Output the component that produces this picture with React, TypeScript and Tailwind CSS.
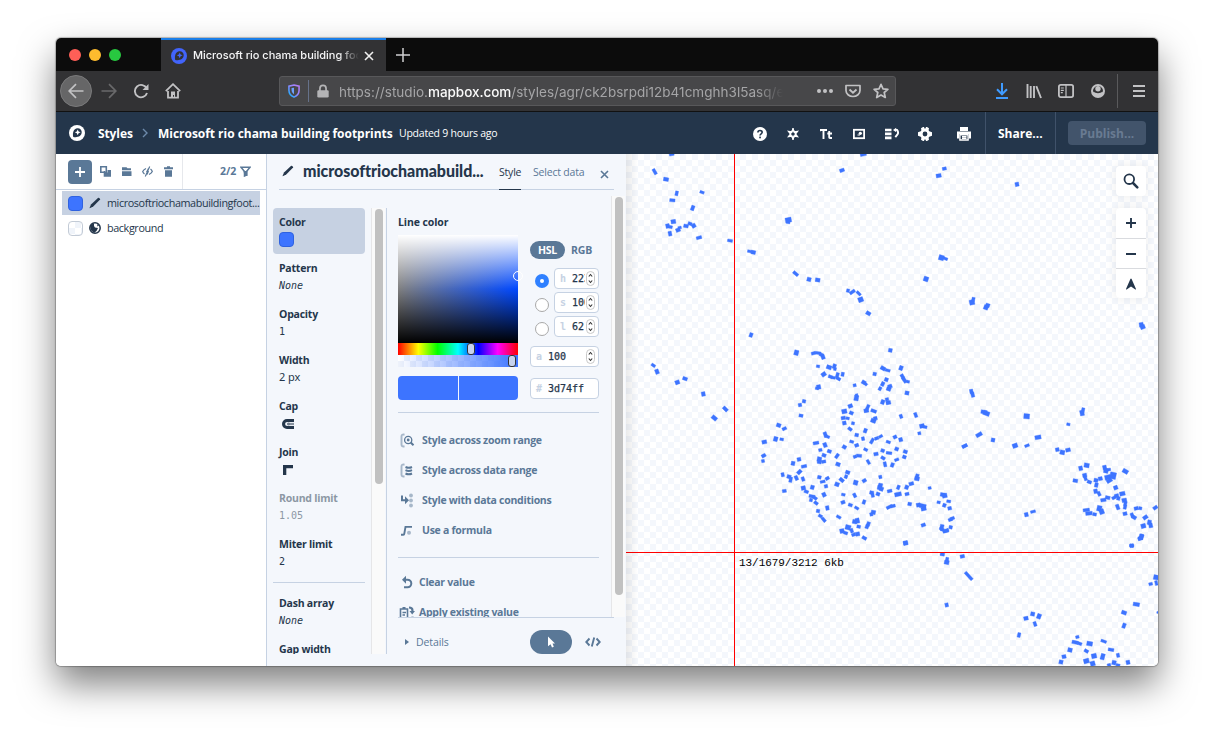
import React from "react";

type Dot = number[];

// Each footprint is [x, y, width, height, rotation] on a grid of thirds of a pixel.
const NORTH_WEST: Dot[] = [
  [137,13,14,8],[86,65,9,18,-30],[120,88,15,11,10],[152,130,9,14],[139,151,16,9,5],[228,127,13,8,20],[200,174,10,15,20],
  [142,215,14,12,-10],[125,228,11,13],[134,231,10,9],[132,251,10,14],[156,240,13,11,-20],[161,233,10,8],[180,228,14,10],
  [192,221,12,9,20],[203,227,12,12,-30],[219,263,16,9,-15],[312,272,15,8,10],[371,304,13,8,10],[382,307,13,11,12],[487,210,18,14],[487,214,11,14,10],
  [509,371,9,18,-50],[549,388,12,12,15],[575,390,14,11,10],[666,422,9,10],[679,426,18,9,-35],[698,430,16,8,45],
  [704,449,15,14,-20],[727,490,14,11,30],[375,555,10,13,20],[648,61,14,10,-20],[712,14,18,8],
];
const NORTH_EAST: Dot[] = [
  [163,56,12,9],[146,77,15,11,-10],[381,103,11,12],[154,323,15,15,15],[166,326,14,8,20],[108,387,14,14,20],[246,457,15,15],
  [250,448,9,12],[288,472,13,14,20],[293,466,12,11,20],[754,524,12,13,-10],[758,531,14,12,-20],
];
const WEST: Dot[] = [
  [82,91,13,8,35],[93,110,11,14,-20],[154,142,13,12,-20],[177,131,14,10,20],[232,177,11,13,-10],[298,222,10,17,-45],[265,249,12,17,-50],
];
const CENTER: Dot[] = [
  [109,53,13,15,15],[391,46,11,11,10],[160,55,12,9,-15],[174,54,18,8,8],[184,59,12,9,20],[189,66,11,13,-20],[174,94,10,8,10],
  [207,97,15,12,20],[223,94,10,14,20],[225,102,8,9],[191,118,14,12,-35],[211,125,12,9,20],[220,128,12,8,10],[232,121,9,16,15],[235,131,14,9,30],[248,118,9,12,10],
  [176,156,12,13],[171,160,10,8],[284,151,9,9],[311,142,12,11,30],[317,147,11,8,45],[289,189,13,16,10],[290,181,8,9],
  [344,117,10,10],[369,100,15,11,30],[383,106,15,8,15],[423,99,11,13,20],[427,124,10,13,-30],[433,135,10,18,-35],[444,140,9,8],
  [379,134,11,11,20],[368,147,10,13,25],[360,161,9,11,30],[390,154,12,11,-20],[386,162,13,11,20],[441,174,12,11],
  [381,193,10,9],[368,201,11,13,20],[385,203,14,11],[132,199,10,10],[120,210,10,10],[123,242,12,9],[56,271,13,11,20],[73,281,13,9,-25],
  [47,312,12,14,15],[65,313,11,8,10],[13,321,14,11],[11,362,13,10,-30],[9,378,9,9],
  [271,213,13,11,-20],[253,229,15,13],[274,234,12,10,25],[250,249,13,10],[263,250,10,8],[253,264,11,11],[279,265,9,9],
  [323,217,9,17,25],[319,227,14,11,-10],[341,228,17,9,20],[340,257,15,12,20],[346,250,11,10],[270,282,13,9,35],
  [316,287,10,13,20],[290,300,11,10],[309,311,9,11],[275,320,12,8,15],[290,331,12,10,-20],[253,336,12,11,30],
  [336,318,9,18,30],[350,310,12,9,-20],[362,304,12,8,-30],[385,321,13,8,20],[405,306,11,10,-25],[422,314,11,12,-15],
  [423,244,9,12,-20],[467,240,9,15,-20],[486,273,14,12],[495,276,12,8],[478,295,9,9],[614,333,15,9,-25],
  [196,299,10,16,-20],[202,305,14,8,20],[168,324,17,9],[195,330,11,14,-20],[181,345,10,9],[208,349,12,10,20],[192,361,12,10,20],
  [178,373,13,14],[191,380,13,9,-10],[178,381,12,10],[231,363,9,15,35],[234,388,13,11,20],[285,365,10,9,-20],[297,362,16,9,5],
  [317,344,12,8,25],[325,381,8,15,-30],[348,357,13,10],[368,347,11,10,20],[387,354,17,8,8],[410,342,11,11,20],[436,350,12,10,20],
  [369,369,13,9,30],[375,388,9,15],[397,390,10,13,20],[410,374,13,8,-20],[433,366,11,10,20],
  [117,373,11,11],[99,385,11,12],[132,394,16,9],[118,411,11,15,45],[68,419,9,12],[87,425,12,11,15],[92,434,9,16,10],
  [109,429,10,14,-25],[129,432,9,13,-20],[73,468,12,9,-10],[130,459,13,12],[139,470,13,9,20],[157,457,11,12,15],
  [178,427,11,10],[188,440,15,8],[202,430,12,9,-30],[198,454,10,10],[156,484,18,9],[165,489,14,9,35],[153,495,9,10],[168,504,13,9,35],
  [192,479,11,13,-25],[202,519,10,13,-10],[174,528,10,10],[181,543,12,9,30],[191,554,9,16,-40],[236,546,14,8,30],
  [231,448,13,12,20],[245,435,10,15,-50],[258,425,9,11,20],[263,412,13,10,20],[287,443,13,14,15],[313,437,12,10,-30],
  [250,479,11,8],[249,502,12,10,-20],[271,510,12,9,20],[284,481,9,13,-25],[290,519,13,8,30],[312,501,9,13,20],
  [335,473,12,10],[338,481,9,12],[354,477,11,10,20],[361,426,9,10],[361,452,12,14],[364,462,12,12,20],[357,457,9,13],
  [389,468,14,9],[415,457,9,13,20],[414,478,20,12],[440,457,11,12,20],[441,477,12,9],[454,446,14,10,-15],[471,425,10,16,15],[471,431,14,12],
  [509,459,9,8],[388,516,18,9,-25],[399,513,14,9],[449,507,11,10],[475,510,12,12],[488,513,20,12],[491,522,15,10],
  [548,479,14,11,10],[554,482,14,13],[536,502,10,8],[566,499,12,8,10],[553,511,10,11,20],[569,520,11,10],[571,554,12,9,-20],[577,550,13,9,-20],
  [546,574,11,11],[545,582,14,8,25],[572,577,10,10],[558,587,16,9,-20],[490,570,13,10,-20],[437,624,13,12],
  [340,532,13,12],[334,538,9,10],[284,560,13,12],[292,557,12,15],[264,577,16,14,15],[246,588,13,13],[257,594,12,9,20],
  [275,587,9,13,-20],[281,599,12,9,-20],[293,597,12,12],[296,575,11,9],[325,567,10,13,20],[321,575,10,12,20],[313,609,14,9,30],
];
const EAST: Dot[] = [
  [34,64,10,13,-10],[38,74,10,15,-15],[72,126,18,11,10],[79,130,19,13,20],[200,139,17,15,5],[369,121,9,15],[366,129,12,16],
  [325,163,10,8],[57,194,19,11,-30],[99,210,11,11],[14,228,16,9,-25],[165,227,15,13,-20],[201,227,14,8,-20],[234,202,18,12,-10],
  [292,239,11,11],[307,247,14,13],[324,240,14,11],[380,286,15,13,10],[362,295,11,13],[346,332,14,10,10],
  [374,316,12,11],[376,324,9,16,-20],[388,336,13,9,20],[408,331,12,11],[421,326,12,11],[409,345,10,13],[407,364,11,13],[417,371,9,14,-25],
  [434,293,11,14],[438,302,13,14],[446,299,12,8],[496,304,17,12,30],[443,322,17,14],[459,317,18,20],[448,332,17,11,-30],
  [467,353,12,12,-20],[487,371,16,12],[462,383,13,9,-30],[470,377,12,10],[475,385,10,11],[430,390,16,10,-10],[443,383,14,10],
  [493,391,14,12],[496,401,9,13],[473,411,10,16,-20],[495,411,9,13],[495,431,12,10],[418,415,14,16],[425,425,14,15,-20],
  [379,420,19,9,-8],[387,430,20,11,-5],[404,433,11,9],[199,434,11,12],[219,425,15,8,-15],
  [529,415,13,10],[541,415,9,9],[586,413,14,10,-35],[516,435,9,12,-20],[522,442,14,11,30],[556,442,15,11,-35],[550,468,14,13,-15],
  [568,457,11,14],[572,466,11,14],[544,500,13,14,15],[540,506,12,9,-20],[515,527,12,9,15],
];
const SOUTH: Dot[] = [
  [16,39,12,12],[125,0,8,6],[137,3,17,10],[127,73,13,9,10],[141,90,9,16,10],[140,97,14,12],[187,79,13,10],[206,138,9,31,-42],[140,225,10,12],
  [398,252,12,12],[378,265,13,11],[417,259,12,15,20],[405,282,9,14,-20],[357,315,9,14],[532,321,10,8],[525,337,18,10],[539,341,13,9,20],
  [510,360,13,12],[492,380,12,11],[483,396,12,12],[569,341,17,13,10],[559,363,13,9,30],[582,378,15,14],[608,380,12,18,15],
  [611,334,17,8,20],[633,359,17,9,10],[654,376,9,12],[559,393,16,14,-15],[578,401,14,14,-15],[642,398,12,13],[627,405,10,8],[654,405,12,7],
  [684,397,11,12],[672,248,15,11,20],[672,287,10,15,20],[709,223,19,11,10],[752,162,11,9],[768,142,14,14],[769,159,8,14],[773,247,5,6],
  [695,47,12,10],[725,19,10,13,20],[721,25,13,11],
];
const GROUPS: { x: number; y: number; dots: Dot[] }[] = [
  { x: 0, y: -4, dots: NORTH_WEST },
  { x: 264, y: -4, dots: NORTH_EAST },
  { x: 0, y: 181, dots: WEST },
  { x: 134, y: 181, dots: CENTER },
  { x: 334, y: 216, dots: EAST },
  { x: 274, y: 376, dots: SOUTH },
];

function Footprints() {
  return (
    <svg width="532" height="512" className="block" fill="#3d74ff">
      {GROUPS.map((g, i) => (
        <g key={i} transform={`translate(${g.x} ${g.y}) scale(0.33333)`} stroke="#3d74ff" strokeWidth="1" strokeLinejoin="round">
          {g.dots.map(([x, y, w, h, r = 0], j) => (
            <rect key={j} x={x - w / 2} y={y - h / 2} width={w} height={h} transform={`rotate(${r || (j % 2 ? 12 : -12)} ${x} ${y})`} />
          ))}
        </g>
      ))}
      <path d="M108 0h1v512h-1z M0 398h532v1H0z" fill="#ff0000" />
    </svg>
  );
}

function Icon({ size = 16, box = 16, className = "", children }: { size?: number; box?: number; className?: string; children: React.ReactNode }) {
  return (
    <svg width={size} height={size} viewBox={`0 0 ${box} ${box}`} className={`block shrink-0 ${className}`} fill="currentColor">
      {children}
    </svg>
  );
}

const stroke = { fill: "none", stroke: "currentColor" };

function Logo({ hole }: { hole: string }) {
  return (
    <Icon>
      <circle cx="8" cy="8" r="8" />
      <path d="M4.200 11.900c-.9-4 .3-8.300 4.300-8.600 2.600-.1 4.300 1.800 4.200 4-.2 4.300-4.500 5.400-8.500 4.600z" fill={hole} />
      <path d="M8.700 4.500l.9 1.900 2 .9-2 .9-.9 2-.9-2-2-.9 2-.9z" />
    </Icon>
  );
}

function Pencil() {
  return (
    <Icon size={12} box={12}>
      <path d="M9.200.8c.6-.4 2.400 1 1.900 1.800L4.200 9.500.8 11.200c-.2 0-.3-.2-.2-.5L2 7.500z" />
    </Icon>
  );
}

function TabStrip() {
  return (
    <div className="flex h-[33px] bg-[#0c0c0c]">
      <div className="flex w-[105px] items-center gap-2 pl-[13px] pt-[1px]">
        <span className="size-3 rounded-full bg-[#ff5f57]" />
        <span className="size-3 rounded-full bg-[#febc2e]" />
        <span className="size-3 rounded-full bg-[#28c840]" />
      </div>
      <div className="flex w-[225px] items-center border-t-2 border-[#1a7ee8] bg-[#323234] pl-[10px] text-[#4264fb]">
        <Logo hole="#323234" />
        <div className="ml-[6px] w-[166px] overflow-hidden whitespace-nowrap text-[11px] font-medium tracking-[-0.02px] text-[#f5f5f6] [mask-image:linear-gradient(to_right,#000_88%,transparent)]">
          Microsoft rio chama building footprints
        </div>
        <Icon size={10} box={10} className="ml-[5px] text-[#f0f0f0]">
          <path d="M1 1l8 8M9 1L1 9" {...stroke} strokeWidth="1.600" />
        </Icon>
      </div>
      <div className="flex w-[34px] items-center justify-center text-[#d0d0d2]">
        <Icon size={14} box={14}>
          <path d="M7 0v14M0 7h14" {...stroke} strokeWidth="1.500" />
        </Icon>
      </div>
    </div>
  );
}

function NavBar() {
  return (
    <div className="flex h-[41px] items-center border-b border-[#111] bg-[#323234] text-[#c2c2c4]">
      <div className="ml-[4px] flex size-8 items-center justify-center rounded-full border border-[#7a7a7b] bg-[#666667]">
        <Icon>
          <path d="M15.500 8H1M8 1.200L1.200 8 8 14.800" {...stroke} strokeWidth="1.700" />
        </Icon>
      </div>
      <Icon className="ml-[9px] text-[#69696b]">
        <path d="M.5 8H15M8 1.200L14.800 8 8 14.800" {...stroke} strokeWidth="1.700" />
      </Icon>
      <Icon className="ml-[16px]">
        <path d="M13.700 5.500A6.200 6.200 0 1 0 14 10" {...stroke} strokeWidth="1.900" />
        <path d="M15.500 1v6h-6z" />
      </Icon>
      <Icon className="ml-[16px]">
        <path d="M.8 8.200L8 1.200l7.200 7M3 8v6.700h10V8" {...stroke} strokeWidth="1.800" />
        <path d="M6 14V8.500h4V14H9v-2H8v2z" />
      </Icon>
      <div className="ml-[98px] flex h-[30px] w-[617px] items-center rounded-[3px] border border-[#58585a] bg-[#474749]">
        <Icon size={14} className="ml-[7px]">
          <defs>
            <linearGradient id="shield" x1="1" y1="0" x2="0" y2="1">
              <stop offset="0" stopColor="#b77cf5" />
              <stop offset=".5" stopColor="#8f86ff" />
              <stop offset="1" stopColor="#00b8ff" />
            </linearGradient>
          </defs>
          <path d="M8 1.200l5.800 1.300V7c0 4-2.500 6.500-5.800 8-3.300-1.500-5.800-4-5.800-8V2.500z" fill="none" stroke="url(#shield)" strokeWidth="1.800" />
          <path d="M8 4.200v7.500C6 10.200 5.200 8.800 5.200 6.500V4.700z" fill="#6da0ff" />
        </Icon>
        <div className="ml-[7px] h-[22px] w-px bg-[#66728a]" />
        <Icon size={14} className="ml-[7px] text-[#b4b4b6]">
          <path d="M4.500 8V5a3.500 3.500 0 0 1 7 0v3" {...stroke} strokeWidth="2" />
          <rect x="1.500" y="7" width="13" height="8.500" rx="1.500" />
        </Icon>
        <div className="ml-[9px] mt-[2px] w-[444px] overflow-hidden whitespace-nowrap text-[13.500px] tracking-[0.03px] text-[#a5a5a7] [mask-image:linear-gradient(to_right,#000_94%,transparent)]">
          https://studio.<span className="font-medium tracking-[-0.05px] text-[#fafafa]">mapbox.com</span>/styles/agr/ck2bsrpdi12b41cmghh3l5asq/edit
        </div>
        <Icon className="ml-[34px]">
          <circle cx="2" cy="8" r="2" /><circle cx="8" cy="8" r="2" /><circle cx="14" cy="8" r="2" />
        </Icon>
        <Icon className="ml-[12px]">
          <path d="M1 2.500h14v5a7 6 0 0 1-14 0z" {...stroke} strokeWidth="1.700" strokeLinejoin="round" />
          <path d="M4.500 6.500L8 9.800l3.500-3.300" {...stroke} strokeWidth="1.900" />
        </Icon>
        <Icon className="ml-[12px]">
          <path d="M8 1.300l2 4.500 4.900.5-3.700 3.200 1.100 5L8 12l-4.300 2.500 1.100-5L1.100 6.300 6 5.800z" {...stroke} strokeWidth="1.700" strokeLinejoin="round" />
        </Icon>
      </div>
      <div className="ml-[98px] flex items-center gap-4">
        <Icon className="text-[#3f9bff]">
          <path d="M8 0v11M3 6.300l5 5 5-5M2 15h12" {...stroke} strokeWidth="2" />
        </Icon>
        <Icon>
          <path d="M1.500 1v14M4.700 3v12M8 3v12M10.300 3.200L15 15" {...stroke} strokeWidth="1.900" />
        </Icon>
        <Icon>
          <rect x=".9" y="1.900" width="14.200" height="12.200" rx="1.800" {...stroke} strokeWidth="1.800" />
          <path d="M8 2v12M2.800 5h3M2.800 7.300h3M2.800 9.600h2" {...stroke} strokeWidth="1.200" />
        </Icon>
        <Icon>
          <circle cx="8" cy="8" r="6" {...stroke} strokeWidth="2" />
          <circle cx="8" cy="5.800" r="2.700" />
          <path d="M3.500 8.500c2 2.300 7 2.300 9 0l.8 2-3 3H5.700l-3-3z" />
        </Icon>
      </div>
      <div className="ml-[11px] h-[34px] w-px bg-[#5a5a5c]" />
      <Icon className="ml-[13px]">
        <path d="M2 3h12M2 8h12M2 13h12" {...stroke} strokeWidth="2" />
      </Icon>
    </div>
  );
}

function Cell({ children }: { children: React.ReactNode }) {
  return <div className="flex w-[33px] justify-center">{children}</div>;
}

function StudioHeader() {
  return (
    <div className="flex h-[42px] items-center bg-[#24364b] text-white">
      <div className="ml-[13px]"><Logo hole="#24364b" /></div>
      <div className="ml-[13px] mt-[2px] w-[35px] whitespace-nowrap text-[12px] font-bold tracking-[-0.1px]">Styles</div>
      <Icon size={10} box={10} className="ml-[7px] text-[#6d8aab]">
        <path d="M3 1l4 4-4 4" {...stroke} strokeWidth="1.400" />
      </Icon>
      <div className="ml-[8px] mt-[2px] w-[235px] whitespace-nowrap text-[12px] font-bold tracking-[-0.03px]">Microsoft rio chama building footprints</div>
      <div className="ml-[6px] mt-[2px] whitespace-nowrap text-[10.500px] tracking-[-0.24px]">Updated 9 hours ago</div>
      <div className="ml-auto flex items-center pr-px pt-px">
        <Cell>
          <Icon size={14} box={14}>
            <circle cx="7" cy="7" r="7" />
            <path d="M4.900 5.600c0-2.800 4.300-2.600 4.300-.3C9.200 6.800 7 6.800 7 8.500" fill="none" stroke="#24364b" strokeWidth="1.600" />
            <rect x="6.200" y="9.600" width="1.700" height="1.700" fill="#24364b" />
          </Icon>
        </Cell>
        <Cell>
          <Icon size={12} box={12}>
            <path d="M6 1.700l1.300 2.300 2.800-.4L8.300 6l1.800 2.400-2.800-.4L6 10.300 4.700 8l-2.800.4L3.700 6 1.900 3.600l2.800.4z" {...stroke} strokeWidth="1.700" />
            <path d="M5.300 0h1.400v3H5.300zM5.300 9h1.400v3H5.300z" />
          </Icon>
        </Cell>
        <Cell>
          <Icon size={12} box={12}>
            <path d="M0 3.200V2h7M3.500 2v9M9.200 3v6.200q0 .8.8.800H12M7.300 5.500H12" {...stroke} strokeWidth="1.900" />
          </Icon>
        </Cell>
        <Cell>
          <Icon size={12} box={12}>
            <rect x=".9" y="1.800" width="10.200" height="8.400" {...stroke} strokeWidth="1.800" />
            <circle cx="7.300" cy="5.300" r="1.600" /><path d="M4.500 6.500h2.500v1H4.500z" />
          </Icon>
        </Cell>
        <Cell>
          <Icon size={14} box={14}>
            <path d="M0 3h6.500M0 6.900h6.500M0 10.800h6.500" {...stroke} strokeWidth="2.700" />
            <path d="M10.500 2.900h1.500q2 2.500.3 4.800l-2 2.500" {...stroke} strokeWidth="1.900" />
            <path d="M8 3l3.200-2.300v4.600z" />
          </Icon>
        </Cell>
        <Cell>
          <Icon size={14} box={14}>
            <path d="M5 0h1l.5 1.500h1L8 0h1l2 1.300-.4 2 .7 1 2.700.9v3.600l-2.700.9-.7 1 .4 2L9 14H8l-.5-1.500h-1L6 14H5l-2-1.300.4-2-.7-1L0 8.800V5.200l2.700-.9.700-1-.4-2zM7 4.600a2.400 2.400 0 1 0 0 4.800 2.400 2.400 0 0 0 0-4.800z" fillRule="evenodd" />
          </Icon>
        </Cell>
        <div className="flex w-[43px] justify-center pl-[2px]">
          <Icon size={14} box={14}>
            <path d="M3 0h8v4H3zM0 4.500h14v7h-2V7H2v4.500H0z" />
            <path d="M2.900 7.800h8.200v5.200H2.900zM5 9.700h4.500M5 11.400h4.500" {...stroke} strokeWidth="1.400" />
          </Icon>
        </div>
      </div>
      <div className="flex h-full w-[70px] items-center border-l border-[#40526a] pl-3 pt-[2px] text-[12px] font-bold">Share...</div>
      <div className="flex h-full w-[103px] items-center border-l border-[#40526a] pl-3">
        <div className="flex h-6 w-[78px] items-center justify-center rounded-[4px] bg-[#42546b] pt-px text-[12px] font-bold text-[#697b92]">Publish...</div>
      </div>
    </div>
  );
}

function LayerList() {
  return (
    <div className="w-[210px] shrink-0 bg-white text-[#5a7897]">
      <div className="flex h-9 items-center border-b border-[#c6d2e3]">
        <div className="flex h-full w-[127px] items-center border-r border-[#e6e8ec] pl-3">
          <div className="flex size-6 items-center justify-center rounded-[4px] bg-[#5a7897] text-white">
            <Icon size={10} box={10}><path d="M5 0v10M0 5h10" {...stroke} strokeWidth="1.800" /></Icon>
          </div>
          <div className="ml-[8px] flex gap-[10px]">
            <Icon size={11} box={11}><path d="M.8.800h5.500v5.500H.800z" {...stroke} strokeWidth="1.600" /><path d="M3.700 5H5v1.500h2.500V4H11v6.700H3.700z" /></Icon>
            <Icon size={11} box={11}><path d="M1 1.200h4.500l1 1h3.500V4.200H1zM1 5.200h9.500V10H1z" /></Icon>
            <Icon size={11} box={11}><path d="M4 2.500Q1.500 3.800.700 5.500 1.200 7 2.500 8M7 8.500q2.500-1.200 3.300-3Q9.800 4 8.500 3M7.700.600L3.300 10.400M4.500 6.200L6.500 2.500M6.500 5L5 8.500" {...stroke} strokeWidth="1.200" /></Icon>
            <Icon size={11} box={11}><path d="M4 .300h3v1h3v2H1v-2h3zM2 4.200h7v6.500H2z" /></Icon>
          </div>
        </div>
        <div className="flex items-center pl-[37px] pt-px text-[10.500px] font-bold">
          2/2
          <Icon size={11} box={11} className="-mt-px ml-[4px]"><path d="M1 1.300h9L6.500 5.500V9l-2 1V5.500z" {...stroke} strokeWidth="1.500" /><path d="M3.500 5h4v5h-3z" /></Icon>
        </div>
      </div>
      <div className="mt-px px-[6px] text-[#24364b]">
        <div className="flex h-6 items-center bg-[#c6d1e2] pl-[6px]">
          <span className="size-[15px] shrink-0 rounded-[4px] border border-[#2f62e0] bg-[#3d74ff]" />
          <span className="ml-[6px]"><Pencil /></span>
          <span className="ml-[6px] whitespace-nowrap text-[10.800px] tracking-[-0.39px]">microsoftriochamabuildingfoot...</span>
        </div>
        <div className="flex h-[26px] items-center pl-[6px]">
          <span className="size-[15px] shrink-0 rounded-[4px] border border-[#c3cbd6] bg-[repeating-conic-gradient(#f0f4fa_0_25%,#fff_0_50%)] bg-[length:12px_12px]" />
          <Icon size={12} box={12} className="ml-[6px]">
            <circle cx="6" cy="6" r="5.200" {...stroke} strokeWidth="1.500" />
            <path d="M1 3.500L5 1v3l1 1.500 3 .5L7.500 9 5 11 1.800 8z M8 2l2 1.500-1.500 1z" />
          </Icon>
          <span className="ml-[6px] text-[10.800px] tracking-[-0.39px]">background</span>
        </div>
      </div>
    </div>
  );
}

function Prop({ name, muted, selected, children }: { name: string; muted?: boolean; selected?: boolean; children?: React.ReactNode }) {
  return (
    <div className={`h-[46px] shrink-0 rounded-[4px] px-[6px] pt-[6px] ${selected ? "bg-[#c6d1e2]" : ""} ${muted ? "text-[#8c97a4]" : ""}`}>
      <div className="whitespace-nowrap text-[10.500px] font-bold leading-4 tracking-[-0.22px]">{name}</div>
      <div className="flex h-[18px] items-center font-['DejaVu_Sans_Mono',monospace] text-[10px]">{children}</div>
    </div>
  );
}

function PropertyList() {
  return (
    <div className="flex h-[446px] overflow-hidden">
      <div className="flex w-[92px] flex-col">
        <Prop name="Color" selected><span className="size-[15px] rounded-[4px] border border-[#2f62e0] bg-[#3d74ff]" /></Prop>
        <Prop name="Pattern"><i>None</i></Prop>
        <Prop name="Opacity">1</Prop>
        <Prop name="Width"><span className="pt-px font-['Noto_Sans',sans-serif] text-[11px] tracking-[-0.100px]">2 px</span></Prop>
        <Prop name="Cap">
          <Icon size={12} box={12} className="ml-[3px] mt-[2px]">
            <path d="M5 1h7v3.200H7.500V7.800H12V11H5A5 5 0 0 1 5 1z" />
            <circle cx="5.200" cy="6" r="2.100" fill="#f4f7fc" />
            <path d="M5.200 5.300H12v1.400H5.200z" />
            <path d="M6.500 4.200H12v1H6.500zM6.500 6.800H12v1H6.500z" fill="#f4f7fc" />
          </Icon>
        </Prop>
        <Prop name="Join"><Icon size={12} box={12} className="ml-[3px] mt-[2px]"><path d="M1 1h10v3.300H4.300V11H1z" /></Icon></Prop>
        <Prop name="Round limit" muted>1.05</Prop>
        <Prop name="Miter limit">2</Prop>
        <div className="mb-[6px] mt-[6px] h-px shrink-0 bg-[#c6d2e3]" />
        <Prop name="Dash array"><i>None</i></Prop>
        <Prop name="Gap width">0</Prop>
      </div>
      <div className="ml-[6px] w-[14px] border-l border-[#e6e6e8] bg-[#fafafa] pl-[3px] pt-px">
        <div className="h-[275px] w-2 rounded-full bg-[#c1c1c1]" />
      </div>
    </div>
  );
}

function Stepper() {
  return (
    <svg width="9" height="15" viewBox="0 0 9 15" className="ml-auto block shrink-0">
      <rect x=".5" y=".5" width="8" height="14" rx="4" fill="#fff" stroke="#c8c8c8" />
      <path d="M2.800 5.500L4.500 3.500l1.700 2M2.800 9.500l1.700 2 1.700-2" fill="none" stroke="#333" strokeWidth="1.100" />
    </svg>
  );
}

function Field({ label, value, wide, step = true }: { label: string; value: string; wide?: boolean; step?: boolean }) {
  return (
    <div className={`flex h-[21px] items-center rounded-[4px] border border-[#c6d2e3] bg-white pl-[5px] pr-[3px] font-['DejaVu_Sans_Mono',monospace] text-[10px] ${wide ? "w-[69px]" : "w-[45px]"}`}>
      <span className="w-[6px] font-bold text-[#c6d2e3]">{label}</span>
      <span className={`ml-[6px] overflow-hidden [-webkit-text-stroke:0.25px_#24364b] ${wide ? "" : "w-[13px]"}`}>{value}</span>
      {step && <Stepper />}
    </div>
  );
}

function Radio({ on }: { on?: boolean }) {
  return on ? (
    <span className="flex size-[14px] items-center justify-center rounded-full bg-[#2f80ff]"><span className="size-1 rounded-full bg-white" /></span>
  ) : (
    <span className="size-[14px] rounded-full border border-[#a9a9a9] bg-white" />
  );
}

function ColorPicker() {
  return (
    <div className="flex h-[165px]">
      <div className="w-[120px]">
        <div className="relative h-[108px] bg-[linear-gradient(to_bottom,#fff,rgba(255,255,255,0)_50%,rgba(0,0,0,0)_50%,#000),linear-gradient(to_right,#808080,#0048ff)]">
          <span className="absolute left-[115px] top-[36px] size-[10px] rounded-full border border-white" />
        </div>
        <div className="relative h-3 bg-[linear-gradient(to_right,#f00,#ff0_17%,#0f0_33%,#0ff_50%,#00f_67%,#f0f_83%,#f00)]">
          <span className="absolute left-[69px] top-0 h-3 w-2 rounded-[3px] border border-[#333] bg-[#c6d2ee]" />
        </div>
        <div className="relative h-3 bg-[linear-gradient(to_right,transparent,#3d74ff),repeating-conic-gradient(#eef2fa_0_25%,#fff_0_50%)] bg-[length:100%_100%,12px_12px]">
          <span className="absolute left-[110px] top-0 h-3 w-2 rounded-[3px] border border-[#333] bg-[#c6d2ee]" />
        </div>
        <div className="mt-[9px] flex h-6 gap-px overflow-hidden rounded-[4px]">
          <div className="w-[60px] bg-[#3d74ff]" />
          <div className="flex-1 bg-[#3d74ff]" />
        </div>
      </div>
      <div className="ml-3 w-[69px] pt-[6px]">
        <div className="flex h-[18px] items-center text-[10.500px] font-bold text-[#5a7897]">
          <span className="flex h-[18px] w-[35px] items-center justify-center rounded-full bg-[#5a7897] pt-px tracking-[-0.2px] text-white">HSL</span>
          <span className="ml-[6px] pt-px tracking-[-0.2px]">RGB</span>
        </div>
        <div className="mt-[9px] flex">
          <div className="flex w-6 flex-col gap-[10px] pl-[5px] pt-[6px]"><Radio on /><Radio /><Radio /></div>
          <div className="flex flex-col gap-[3px]">
            <Field label="h" value="223" />
            <Field label="s" value="100" />
            <Field label="l" value="62" />
          </div>
        </div>
        <div className="mt-[9px]"><Field label="a" value="100" wide /></div>
        <div className="mt-[11px]"><Field label="#" value="3d74ff" wide step={false} /></div>
      </div>
    </div>
  );
}

function Action({ icon, text, tight }: { icon: React.ReactNode; text: string; tight?: boolean }) {
  return (
    <div className="flex h-[30px] items-center text-[10.500px] font-bold tracking-[-0.27px] text-[#5a7897]">
      <span className={tight ? "ml-[1px]" : "ml-[2px]"}>{icon}</span>
      <span className={`whitespace-nowrap ${tight ? "ml-[4px]" : "ml-[6px]"}`}>{text}</span>
    </div>
  );
}

function ValueEditor() {
  return (
    <div className="h-[421px] w-[213px] overflow-hidden pl-[11px] pt-[18px]">
      <div className="text-[10.500px] font-bold leading-4 tracking-[-0.1px]">Line color</div>
      <div className="mt-[5px]"><ColorPicker /></div>
      <div className="mt-[12px] h-px w-[201px] bg-[#c6d2e3]" />
      <div className="mt-[13px]">
        <Action text="Style across zoom range" icon={
          <Icon><path d="M4.500 1.700Q1.500 1 1.500 3.500v8q0 2.500 3 1.800" {...stroke} strokeWidth="1.900" opacity=".5" /><circle cx="8.200" cy="7" r="3.600" {...stroke} strokeWidth="1.300" /><circle cx="8.200" cy="7" r="1.400" /><path d="M10.700 9.500l2.800 2.800" {...stroke} strokeWidth="2" /></Icon>
        } />
        <Action text="Style across data range" icon={
          <Icon><path d="M4.500 1.700Q1.500 1 1.500 3.500v8q0 2.500 3 1.800" {...stroke} strokeWidth="1.900" opacity=".5" /><path d="M5.500 4q3.300 1.500 6.500 0M5.500 7.200q3.300 1.500 6.500 0M5.500 10.500q3.300 1.500 6.500 0" {...stroke} strokeWidth="2" /></Icon>
        } />
        <Action text="Style with data conditions" icon={
          <Icon><path d="M2 2.500v4.700H6" {...stroke} strokeWidth="2" /><path d="M5 3.200v8l4-4z" /><g opacity=".5"><circle cx="11" cy="2.500" r="1.900" /><circle cx="11" cy="7.500" r="1.900" /><circle cx="11" cy="12.500" r="1.900" /></g></Icon>
        } />
        <Action text="Use a formula" icon={
          <Icon><path d="M1 11.700h2.300q.9 0 1-1L5.500 3.900H12" {...stroke} strokeWidth="1.900" /><circle cx="9" cy="9.700" r="2" opacity=".5" /></Icon>
        } />
      </div>
      <div className="mt-[11px] h-px w-[201px] bg-[#c6d2e3]" />
      <div className="mt-[10px]">
        <Action tight text="Clear value" icon={
          <Icon><path d="M5 4.700h3.500a3.700 3.700 0 0 1 0 7.600H5" {...stroke} strokeWidth="2" /><path d="M3 4.700l4-4v8z" /></Icon>
        } />
        <Action tight text="Apply existing value" icon={
          <Icon><path d="M1.500 4H8.500v9.500h-7zM3.500 7.500h3.500M3.500 10h2.500" {...stroke} strokeWidth="1.600" /><path d="M3.500 2h3v2h-3zM10.500 6h5.500L13.200 9.500zM12.300 7V5q0-1.500-2.300-1.500V1.500q4.500 0 4.500 3.500v2z" /><circle cx="13.500" cy="13" r="1.800" opacity=".5" /></Icon>
        } />
      </div>
    </div>
  );
}

function PropertyPanel() {
  return (
    <div className="w-[360px] shrink-0 border-l border-[#c6d2e3] bg-[#f4f7fc] text-[#24364b]">
      <div className="ml-3 flex h-9 w-[335px] border-b border-[#c6d2e3]">
        <div className="ml-[3px] pt-[11px]"><Pencil /></div>
        <div className="ml-[9px] w-[196px] whitespace-nowrap pt-[5px] font-['Lato',sans-serif] text-[16px] font-black tracking-[-0.04px]">microsoftriochamabuild...</div>
        <div className="-mb-px w-[22px] whitespace-nowrap border-b border-[#24364b] pt-[11px] text-[10.500px] tracking-[-0.2px]">Style</div>
        <div className="ml-[12px] pt-[11px] text-[10.500px] tracking-[-0.2px] text-[#5a7897]">Select data</div>
        <Icon size={9} box={9} className="ml-auto mr-[5px] mt-[16px] text-[#5a7897]"><path d="M1 1l7 7M8 1L1 8" {...stroke} strokeWidth="1.600" /></Icon>
      </div>
      <div className="flex">
        <div className="pl-[6px] pt-[18px]"><PropertyList /></div>
        <div className="ml-px mt-[18px] h-[446px] w-px bg-[#c6d2e3]" />
        <div className="w-[238px] pt-[6px]">
          <div className="flex h-[421px]">
            <ValueEditor />
            <div className="ml-[11px] w-[14px] border-l border-[#e6e6e8] bg-[#fafafa] pl-[3px] pt-px">
              <div className="h-[398px] w-2 rounded-full bg-[#c1c1c1]" />
            </div>
          </div>
          <div className="ml-[11px] flex h-[49px] w-[216px] items-center border-t border-[#c6d2e3] text-[#5a7897]">
            <Icon size={6} box={6} className="ml-[6px]"><path d="M1 0l4 3-4 3z" /></Icon>
            <span className="ml-[6px] pt-[2px] text-[10.500px] tracking-[-0.1px]">Details</span>
            <span className="ml-auto flex h-6 w-[42px] items-center justify-center rounded-full bg-[#5a7897] text-white">
              <Icon size={12} box={12}><path d="M3 .5L10 7.500H7.500l1.300 3.200-1.800.8-1.400-3.300L3 10.200z" /></Icon>
            </span>
            <Icon size={16} className="ml-[13px] mr-[13px]"><path d="M4.500 4.500L1.300 8l3.200 3.500M11.500 4.500L14.700 8l-3.200 3.500M9.200 3.500l-2.400 9" {...stroke} strokeWidth="1.900" /></Icon>
          </div>
        </div>
      </div>
    </div>
  );
}

function MapView() {
  return (
    <div className="relative h-[512px] w-[532px] bg-[repeating-conic-gradient(#f4f7fc_0_25%,#fff_0_50%)] bg-[length:12px_12px] text-[#24364b]">
      <Footprints />
      <div className="absolute left-0 top-0 h-full w-3 bg-linear-to-r from-black/8 to-transparent" />
      <div className="absolute left-[113px] top-[402px] whitespace-nowrap font-['Liberation_Mono',monospace] text-[11px] leading-[14px] tracking-[-0.05px] text-black">13/1679/3212 6kb</div>
      <div className="absolute right-3 top-3 flex w-[30px] flex-col gap-3">
        <div className="flex h-[30px] items-center justify-center rounded-[4px] bg-white shadow-[0_0_10px_2px_rgba(0,0,0,0.06)]">
          <Icon size={16}><circle cx="6.300" cy="6.200" r="4.800" {...stroke} strokeWidth="1.800" /><path d="M10 10l4.300 4.300" {...stroke} strokeWidth="2.500" strokeLinecap="round" /></Icon>
        </div>
        <div className="h-[90px] rounded-[4px] bg-white shadow-[0_0_10px_2px_rgba(0,0,0,0.06)]">
          <div className="flex h-[31px] items-center justify-center border-b border-[#d9dbdf]"><Icon size={10} box={10}><path d="M5 0v10M0 5h10" {...stroke} strokeWidth="1.900" /></Icon></div>
          <div className="flex h-[30px] items-center justify-center border-b border-[#d9dbdf] pt-px"><Icon size={10} box={10}><path d="M0 5h10" {...stroke} strokeWidth="1.900" /></Icon></div>
          <div className="flex h-[29px] items-center justify-center"><Icon size={12} box={12}><path d="M6 .5q.4 0 .6.500L11 11q0 .7-.700.600L6 8.500l-4.300 3.100Q1 11.700 1 11L5.400 1q.2-.5.600-.500z" /></Icon></div>
        </div>
      </div>
    </div>
  );
}

export default function App() {
  return (
    <div className="h-[740px] w-[1214px] overflow-hidden bg-white pl-[56px] pt-[38px] font-['Open_Sans',sans-serif]">
      <div className="h-[628px] w-[1102px] rounded-[5px] shadow-[0_0_1px_1px_rgba(0,0,0,0.25),0_18px_36px_rgba(0,0,0,0.5)]">
        <div className="h-[628px] overflow-hidden rounded-[5px]">
          <div className="font-['Inter',sans-serif]">
            <TabStrip />
            <NavBar />
          </div>
          <StudioHeader />
          <div className="flex h-[512px]">
            <LayerList />
            <PropertyPanel />
            <MapView />
          </div>
        </div>
      </div>
    </div>
  );
}
